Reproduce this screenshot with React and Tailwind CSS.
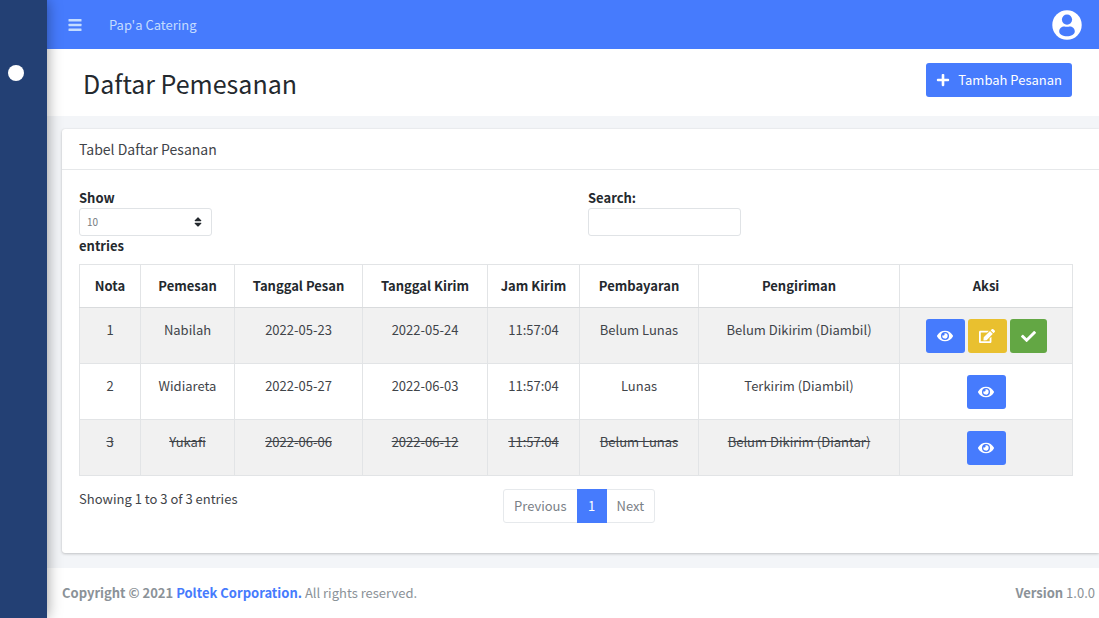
import React from "react";
import { FaPlus, FaEye, FaEdit, FaCheck, FaSort } from "react-icons/fa";

const orders = [
  { nota: 1, name: "Nabilah", ordered: "2022-05-23", sent: "2022-05-24", time: "11:57:04", pay: "Belum Lunas", delivery: "Belum Dikirim (Diambil)", open: true },
  { nota: 2, name: "Widiareta", ordered: "2022-05-27", sent: "2022-06-03", time: "11:57:04", pay: "Lunas", delivery: "Terkirim (Diambil)" },
  { nota: 3, name: "Yukafi", ordered: "2022-06-06", sent: "2022-06-12", time: "11:57:04", pay: "Belum Lunas", delivery: "Belum Dikirim (Diantar)", cancelled: true },
];

const columns = [
  ["Nota", "w-[61px]"],
  ["Pemesan", "w-[94px]"],
  ["Tanggal Pesan", "w-[128px]"],
  ["Tanggal Kirim", "w-[125px]"],
  ["Jam Kirim", "w-[92px]"],
  ["Pembayaran", "w-[119px]"],
  ["Pengiriman", "w-[201px]"],
  ["Aksi", "w-[173px]"],
];

function MenuIcon() {
  return (
    <svg width="14" height="14" viewBox="0 0 14 14" fill="currentColor" aria-hidden="true">
      <rect x="0.5" y="1" width="13" height="2.6" rx="0.5" />
      <rect x="0.5" y="5.7" width="13" height="2.6" rx="0.5" />
      <rect x="0.5" y="10.4" width="13" height="2.6" rx="0.5" />
    </svg>
  );
}

function UserIcon() {
  return (
    <svg width="30" height="30" viewBox="0 0 30 30" aria-hidden="true">
      <circle cx="15" cy="15" r="14.7" fill="#ffffff" />
      <circle cx="15" cy="9.6" r="5.1" fill="#467bfd" />
      <path d="M7.2 21.3c0-3.3 2.6-4.9 5-4.9.8 0 1.4.4 2.8.4s2-.4 2.8-.4c2.4 0 5 1.600 5 4.900 0 3.200-3.800 5-7.800 5s-7.800-1.800-7.800-5z" fill="#467bfd" />
    </svg>
  );
}

function ActionButton({ label, color, children }) {
  return (
    <button type="button" aria-label={label} className={`flex h-[34px] items-center justify-center rounded-[3px] text-white ${color}`}>
      {children}
    </button>
  );
}

function OrderRow({ order }) {
  const cells = [order.nota, order.name, order.ordered, order.sent, order.time, order.pay, order.delivery];
  return (
    <tr className="h-14 odd:bg-[#f1f1f1]">
      {cells.map((value, i) => (
        <td key={i} className={`border border-[#e2e4e6] pt-3 align-top ${order.cancelled ? "line-through" : ""}`}>
          {value}
        </td>
      ))}
      <td className="border border-[#e2e4e6] pt-[11px] align-top">
        <div className="flex justify-center gap-[3px]">
          <ActionButton label="Lihat" color="w-[39px] bg-[#467bfd]"><FaEye size={16} /></ActionButton>
          {order.open && (
            <>
              <ActionButton label="Ubah" color="w-[39px] bg-[#e9c02f]"><FaEdit size={16} /></ActionButton>
              <ActionButton label="Selesai" color="w-[37px] bg-[#63a744]"><FaCheck size={15} /></ActionButton>
            </>
          )}
        </div>
      </td>
    </tr>
  );
}

export default function App() {
  return (
    <div className="flex min-h-screen bg-[#f3f5f8] font-['Noto_Sans_CJK_JP','Noto_Sans_CJK_SC',sans-serif] text-[13px] leading-5 text-[#3f4449]">
      <aside className="z-10 w-[47px] shrink-0 bg-[#234074] pt-[65px] shadow-[0_0_14px_rgba(0,0,0,0.4)]">
        <a href="#menu" aria-label="Menu" className="ml-2 block size-4 rounded-full bg-white" />
      </aside>

      <div className="flex min-w-0 flex-1 flex-col">
        <nav className="flex h-[49px] items-center bg-[#467bfd] pl-[21px] pr-[17px] text-[#c4dcff]">
          <button type="button" aria-label="Toggle menu" className="mr-[27px]"><MenuIcon /></button>
          <a href="#home">Pap'a Catering</a>
          <a href="#profile" aria-label="Profil" className="ml-auto"><UserIcon /></a>
        </nav>

        <header className="flex h-[67px] items-start justify-between bg-white pl-9 pr-[27px] pt-[14px]">
          <h1 className="mt-1 text-[25px] leading-8 text-[#24292e]">Daftar Pemesanan</h1>
          <button type="button" className="flex h-[34px] items-center gap-2 rounded-[3px] bg-[#467bfd] px-[10px] text-white">
            <FaPlus size={14} />
            Tambah Pesanan
          </button>
        </header>

        <main className="flex-1 pb-[14px] pl-[15px] pt-[13px]">
          <section className="rounded-l-[3px] bg-white shadow-[0_0_1px_rgba(0,0,0,0.13),0_1px_3px_rgba(0,0,0,0.2)]">
            <h2 className="flex h-[41px] items-center border-b border-[#e6e8ea] px-[17px] text-[14px]">Tabel Daftar Pesanan</h2>
            <div className="pb-[30px] pl-[17px] pr-[27px] pt-[18px]">
              <div className="grid grid-cols-[509px_1fr] font-bold text-[#24292e]">
                <div className="flex flex-col items-start">
                  <label htmlFor="length">Show</label>
                  <div className="relative w-[133px]">
                    <select id="length" className="block h-7 w-full appearance-none rounded-[3px] border border-[#e0e3e6] bg-white px-[7px] text-[10px] font-normal text-[#757b81]">
                      <option>10</option>
                      <option>25</option>
                      <option>50</option>
                    </select>
                    <FaSort size={12} className="pointer-events-none absolute right-2 top-2" />
                  </div>
                  <span>entries</span>
                </div>
                <div className="flex flex-col items-start">
                  <label htmlFor="search">Search:</label>
                  <input id="search" type="search" className="h-7 w-[153px] rounded-[3px] border border-[#e0e3e6] bg-white px-2 font-normal" />
                </div>
              </div>

              <table className="mt-2 w-full table-fixed border-collapse text-center">
                <thead>
                  <tr className="h-[43px] text-[#24292e]">
                    {columns.map(([name, width]) => (
                      <th key={name} scope="col" className={`border border-[#e2e4e6] border-b-[#d9dbdd] font-bold ${width}`}>{name}</th>
                    ))}
                  </tr>
                </thead>
                <tbody>
                  {orders.map((order) => <OrderRow key={order.nota} order={order} />)}
                </tbody>
              </table>

              <div className="mt-[13px] grid grid-cols-[424px_1fr] items-start">
                <p>Showing 1 to 3 of 3 entries</p>
                <nav aria-label="Halaman" className="flex h-[34px] w-fit rounded-[3px] border border-[#e6e9ec] text-[#7b8187]">
                  <button type="button" className="px-[10px]">Previous</button>
                  <button type="button" aria-current="page" className="-my-px w-[30px] bg-[#467bfd] text-white">1</button>
                  <button type="button" className="px-[10px]">Next</button>
                </nav>
              </div>
            </div>
          </section>
        </main>

        <footer className="flex h-[50px] items-center justify-between bg-white pl-[15px] pr-1 text-[#8b9298]">
          <p>
            <strong>Copyright © 2021 <a href="#poltek" className="text-[#467bfd]">Poltek Corporation.</a></strong> All rights reserved.
          </p>
          <p><b>Version</b> 1.0.0</p>
        </footer>
      </div>
    </div>
  );
}
